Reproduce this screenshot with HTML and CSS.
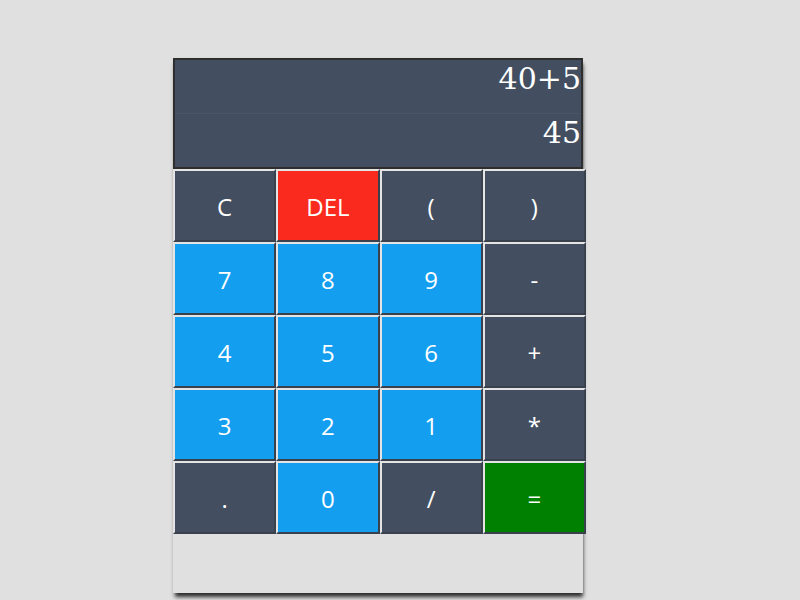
FILE: index.html
```html
<!DOCTYPE html>
<html>
<head>
<meta charset="utf-8">
<link rel="stylesheet" href="styles.css">
</head>
<body>
<div class="calc">
  <div class="display">
    <div class="line expr">40+5</div>
    <div class="line result">45</div>
  </div>
  <div class="keys">
    <button class="key dark">C</button>
    <button class="key red">DEL</button>
    <button class="key dark">(</button>
    <button class="key dark">)</button>
    <button class="key blue">7</button>
    <button class="key blue">8</button>
    <button class="key blue">9</button>
    <button class="key dark">-</button>
    <button class="key blue">4</button>
    <button class="key blue">5</button>
    <button class="key blue">6</button>
    <button class="key dark">+</button>
    <button class="key blue">3</button>
    <button class="key blue">2</button>
    <button class="key blue">1</button>
    <button class="key dark">*</button>
    <button class="key dark">.</button>
    <button class="key blue">0</button>
    <button class="key dark">/</button>
    <button class="key green">=</button>
  </div>
</div>
</body>
</html>
```
FILE: styles.css
```css
html, body {
  margin: 0;
  padding: 0;
  background: #e0e0e0;
}
body {
  height: 600px;
  overflow: hidden;
}
.calc {
  width: 410px;
  height: 535px;
  margin: 58px 0 0 173px;
  background: #e0e0e0;
  box-shadow: 1px 5px 4px -1px rgba(0, 0, 0, 0.8), 0 0 1px rgba(0, 0, 0, 0.08);
}
.display {
  box-sizing: border-box;
  height: 111px;
  border: 2px solid #2e2e2e;
  background: #434f61;
  display: flex;
  flex-direction: column;
}
.line {
  box-sizing: border-box;
  height: 53.5px;
  padding: 1px 0 0 0;
  text-align: right;
  font-family: "DejaVu Serif", serif;
  font-size: 30px;
  color: #ffffff;
}
.expr {
  border-bottom: 1px solid #4a5567;
}
.keys {
  width: 413px;
  display: grid;
  grid-template-columns: repeat(4, 103.25px);
  grid-auto-rows: 73px;
}
.key {
  box-sizing: border-box;
  margin: 0;
  padding: 1px 0 0;
  border: 2px solid;
  border-color: #e4e4e4 #39414d #39414d #e4e4e4;
  font-family: "Open Sans", sans-serif;
  font-size: 24px;
  color: #ffffff;
  display: flex;
  align-items: center;
  justify-content: center;
}
.dark { background: #434f61; }
.blue { background: #139ef0; }
.red { background: #fa2a1e; }
.green { background: #008000; }
```
